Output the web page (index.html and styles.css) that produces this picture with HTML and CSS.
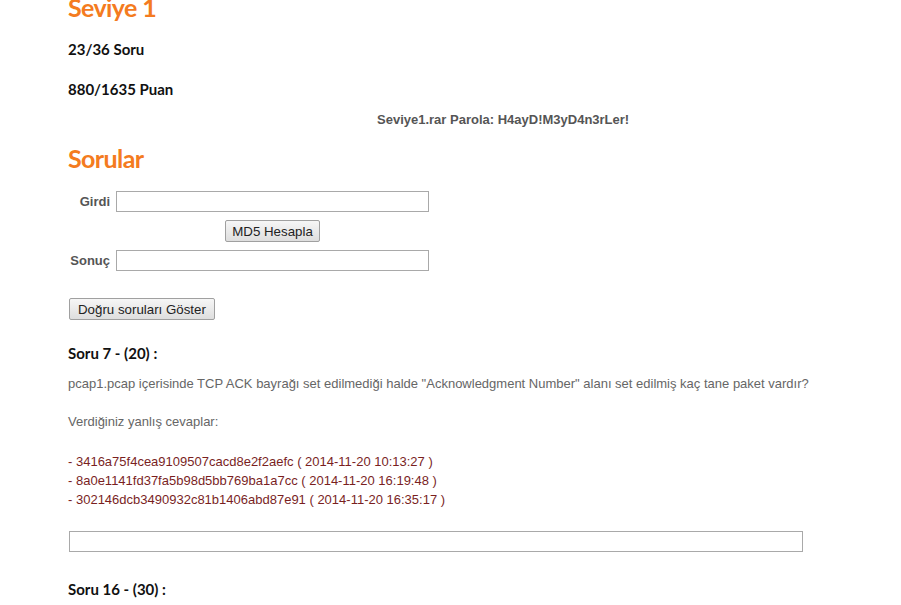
FILE: index.html
```html
<!DOCTYPE html>
<html lang="tr">
<head>
<meta charset="utf-8">
<link rel="stylesheet" href="styles.css">
</head>
<body>
<div class="page">
  <h1 class="title">Seviye 1</h1>
  <p class="stat">23/36 Soru</p>
  <p class="stat stat-2">880/1635 Puan</p>
  <p class="password">Seviye1.rar Parola: H4ayD!M3yD4n3rLer!</p>
  <h2 class="title title-2">Sorular</h2>
  <div class="md5">
    <label class="md5-label">Girdi</label>
    <input class="md5-input" type="text">
    <span></span>
    <div class="md5-btn-cell"><button class="btn">MD5 Hesapla</button></div>
    <label class="md5-label">Sonuç</label>
    <input class="md5-input" type="text">
  </div>
  <button class="btn btn-show">Doğru soruları Göster</button>
  <h3 class="q-title">Soru 7 - (20) :</h3>
  <p class="text">pcap1.pcap içerisinde TCP ACK bayrağı set edilmediği halde "Acknowledgment Number" alanı set edilmiş kaç tane paket vardır?</p>
  <p class="text">Verdiğiniz yanlış cevaplar:</p>
  <ul class="wrong">
    <li>- 3416a75f4cea9109507cacd8e2f2aefc ( 2014-11-20 10:13:27 )</li>
    <li>- 8a0e1141fd37fa5b98d5bb769ba1a7cc ( 2014-11-20 16:19:48 )</li>
    <li>- 302146dcb3490932c81b1406abd87e91 ( 2014-11-20 16:35:17 )</li>
  </ul>
  <input class="answer" type="text">
  <h3 class="q-title q-title-2">Soru 16 - (30) :</h3>
</div>
</body>
</html>
```

FILE: styles.css
```css
html, body {
  margin: 0;
  padding: 0;
  background: #fff;
  overflow: hidden;
}
.page {
  padding-left: 68px;
  width: 800px;
  font-family: "Liberation Sans", Arial, sans-serif;
  color: #666;
  font-size: 13px;
}
.title {
  font-family: Lato, "Open Sans", sans-serif;
  color: #f47b20;
  font-weight: 700;
  font-size: 25px;
  line-height: 30px;
  letter-spacing: -0.6px;
  margin: -8px 0 0;
}
.title-2 {
  margin: 15px 0 0;
  font-size: 25px;
  letter-spacing: -0.6px;
}
.stat {
  font-family: Lato, "Open Sans", sans-serif;
  font-weight: 700;
  font-size: 15px;
  color: #111;
  margin: 17px 0 0;
  line-height: 20px;
}
.stat-2 {
  margin-top: 20px;
}
.password {
  margin: 13px 0 0;
  padding-left: 309px;
  font-weight: 700;
  color: #555;
  line-height: 16px;
}
.md5 {
  display: grid;
  grid-template-columns: 42px 313px;
  column-gap: 6px;
  row-gap: 8px;
  margin-top: 18px;
  align-items: center;
}
.md5-label {
  text-align: right;
  font-weight: 700;
  font-size: 13px;
  color: #555;
}
.md5-input {
  box-sizing: border-box;
  width: 313px;
  height: 21px;
  border: 1px solid #a9a9a9;
  margin: 0;
}
.md5-btn-cell {
  display: flex;
  justify-content: center;
}
.btn {
  font-family: "Liberation Sans", Arial, sans-serif;
  font-size: 13.3px;
  color: #222;
  height: 22px;
  padding: 0 6px;
  border: 1px solid #a0a0a0;
  border-radius: 2px;
  background: linear-gradient(#f6f6f6, #dedede);
  margin: 0;
}
.btn-show {
  display: block;
  margin: 27px 0 0 1px;
  padding: 0 8px;
}
.q-title {
  font-family: Lato, "Open Sans", sans-serif;
  font-weight: 700;
  font-size: 15px;
  color: #111;
  margin: 23px 0 0;
  line-height: 20px;
}
.text {
  margin: 13px 0 0;
  line-height: 16px;
}
.text + .text {
  margin-top: 22px;
}
.wrong {
  list-style: none;
  margin: 22px 0 0;
  padding: 0;
  color: #7a1f1f;
  line-height: 19px;
}
.answer {
  display: block;
  box-sizing: border-box;
  width: 734px;
  height: 21px;
  border: 1px solid #a9a9a9;
  margin: 22px 0 0 1px;
}
.q-title-2 {
  margin-top: 27px;
}
```
